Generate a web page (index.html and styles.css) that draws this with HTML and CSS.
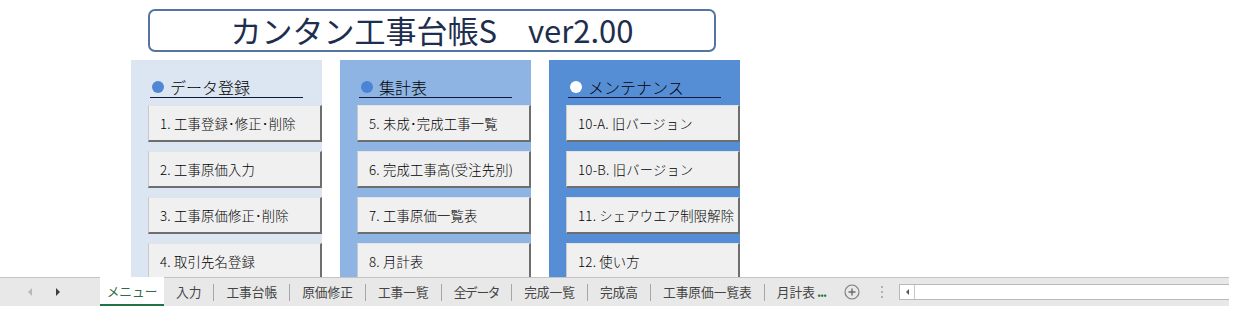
FILE: index.html
```html
<!DOCTYPE html>
<html lang="ja">
<head>
<meta charset="utf-8">
<link rel="stylesheet" href="styles.css">
</head>
<body>
<div class="sheet">
  <div class="title-row">
    <div class="title">カンタン工事台帳S　ver2.00</div>
  </div>
  <div class="panels">
    <div class="panel p1">
      <div class="head"><span class="dot"></span>データ登録</div>
      <div class="btn">1. 工事登録･修正･削除</div>
      <div class="btn">2. 工事原価入力</div>
      <div class="btn">3. 工事原価修正･削除</div>
      <div class="btn">4. 取引先名登録</div>
    </div>
    <div class="panel p2">
      <div class="head"><span class="dot"></span>集計表</div>
      <div class="btn">5. 未成･完成工事一覧</div>
      <div class="btn">6. 完成工事高(受注先別)</div>
      <div class="btn">7. 工事原価一覧表</div>
      <div class="btn">8. 月計表</div>
    </div>
    <div class="panel p3">
      <div class="head"><span class="dot white"></span>メンテナンス</div>
      <div class="btn">10-A. 旧バージョン</div>
      <div class="btn">10-B. 旧バージョン</div>
      <div class="btn">11. シェアウエア制限解除</div>
      <div class="btn">12. 使い方</div>
    </div>
  </div>
  <div class="tabbar">
    <div class="nav">
      <span class="arrow left"></span>
      <span class="arrow right"></span>
    </div>
    <span class="tab active">メニュー</span>
    <span class="tab">入力</span><i class="sep"></i>
    <span class="tab">工事台帳</span><i class="sep"></i>
    <span class="tab">原価修正</span><i class="sep"></i>
    <span class="tab">工事一覧</span><i class="sep"></i>
    <span class="tab narrow">全データ</span><i class="sep"></i>
    <span class="tab">完成一覧</span><i class="sep"></i>
    <span class="tab">完成高</span><i class="sep"></i>
    <span class="tab">工事原価一覧表</span><i class="sep"></i>
    <span class="tab last">月計表</span><span class="more">...</span>
    <svg class="plus" width="16" height="16" viewBox="0 0 16 16"><circle cx="8" cy="8" r="7" fill="none" stroke="#7a7a7a" stroke-width="1.1"/><path d="M8 4.5v7M4.5 8h7" stroke="#6a6a6a" stroke-width="1.4"/></svg>
    <span class="vdots"><b></b><b></b><b></b></span>
    <div class="hscroll">
      <span class="sarrow"></span>
    </div>
  </div>
</div>
</body>
</html>
```
FILE: styles.css
```css
html, body {
  margin: 0;
  padding: 0;
  background: #ffffff;
}
body {
  font-family: "Noto Sans CJK JP", "Noto Sans", sans-serif;
  width: 1250px;
  height: 311px;
  overflow: hidden;
}
.sheet {
  display: flex;
  flex-direction: column;
  height: 311px;
}
.title-row {
  height: 60px;
  flex: none;
  padding: 9px 0 0 148px;
  box-sizing: border-box;
}
.title {
  width: 568px;
  height: 43px;
  box-sizing: border-box;
  border: 2px solid #5574a0;
  border-radius: 7px;
  display: flex;
  align-items: center;
  justify-content: center;
  font-size: 31px;
  font-weight: 400;
  color: #1e2e4e;
  line-height: 1;
  padding-bottom: 2px;
  padding-left: 0;
}
.panels {
  height: 217px;
  flex: none;
  display: flex;
  gap: 18px;
  padding-left: 131px;
  overflow: hidden;
}
.panel {
  width: 191px;
  padding-left: 17px;
  box-sizing: border-box;
  display: flex;
  flex-direction: column;
  gap: 9px;
}
.p1 { background: #dce6f2; }
.p2 { background: #8eb4e3; }
.p3 { background: #558ed5; }
.head {
  flex: none;
  height: 38px;
  margin: 0 0 -2px 2px;
  width: 153px;
  box-sizing: border-box;
  border-bottom: 1px solid #10193a;
  display: flex;
  align-items: flex-end;
  padding: 0 0 1px 2px;
  font-size: 16px;
  font-weight: 300;
  line-height: 18px;
  color: #000;
}
.dot {
  width: 12px;
  height: 12px;
  border-radius: 50%;
  background: #4f86d6;
  margin: 0 6px 3px 0;
  flex: none;
}
.p2 .dot { background: #4b84d4; }
.dot.white { background: #ffffff; }
.btn {
  flex: none;
  height: 37px;
  width: 174px;
  box-sizing: border-box;
  background: #f0f0f0;
  border-top: 1px solid #e3e3e3;
  border-left: 1px solid #c8c8c8;
  border-right: 2px solid #6e6e6e;
  border-bottom: 2px solid #6e6e6e;
  display: flex;
  align-items: center;
  padding-left: 11px;
  font-size: 13.3px;
  font-weight: 300;
  letter-spacing: 0.2px;
  color: #000;
  white-space: nowrap;
}
.tabbar {
  height: 29px;
  width: 1229px;
  box-sizing: border-box;
  background: #e8e8e8;
  border-top: 1px solid #c4c4c4;
  display: flex;
  align-items: center;
  font-size: 12.7px;
  color: #444;
  flex: none;
}
.nav {
  width: 100px;
  display: flex;
  align-items: center;
  padding-left: 28px;
  box-sizing: border-box;
  gap: 24px;
}
.arrow {
  width: 0;
  height: 0;
  border-top: 4px solid transparent;
  border-bottom: 4px solid transparent;
}
.arrow.left { border-right: 4px solid #b8b8b8; }
.arrow.right { border-left: 4px solid #3d3d3d; }
.tab {
  padding: 0 12px;
  line-height: 28px;
  white-space: nowrap;
}
.tab.narrow { letter-spacing: -1.3px; }
.tab.active {
  width: 64px;
  box-sizing: border-box;
  padding: 0;
  text-align: center;
  align-self: stretch;
  margin-top: -1px;
  background: #ffffff;
  color: #2f6b47;
  border-bottom: 2px solid #217346;
  line-height: 27px;
}
.tab.last { padding-right: 2px; }
.sep {
  width: 1px;
  height: 17px;
  background: #a6a6a6;
  flex: none;
}
.more {
  color: #217346;
  font-weight: bold;
  letter-spacing: -1px;
  line-height: 28px;
}
.plus {
  margin-left: 18px;
  flex: none;
}
.vdots {
  display: flex;
  flex-direction: column;
  gap: 3px;
  margin-left: 21px;
}
.vdots b {
  width: 2px;
  height: 2px;
  background: #b0b0b0;
}
.hscroll {
  margin-left: 16px;
  flex: 1;
  height: 14px;
  background: #ffffff;
  border: 1px solid #b9b9b9;
  border-right: none;
  display: flex;
  align-items: center;
}
.sarrow {
  width: 14px;
  height: 100%;
  border-right: 1px solid #c8c8c8;
  display: flex;
  align-items: center;
  justify-content: center;
}
.sarrow::before {
  content: "";
  border-top: 3px solid transparent;
  border-bottom: 3px solid transparent;
  border-right: 3px solid #555;
}
```
